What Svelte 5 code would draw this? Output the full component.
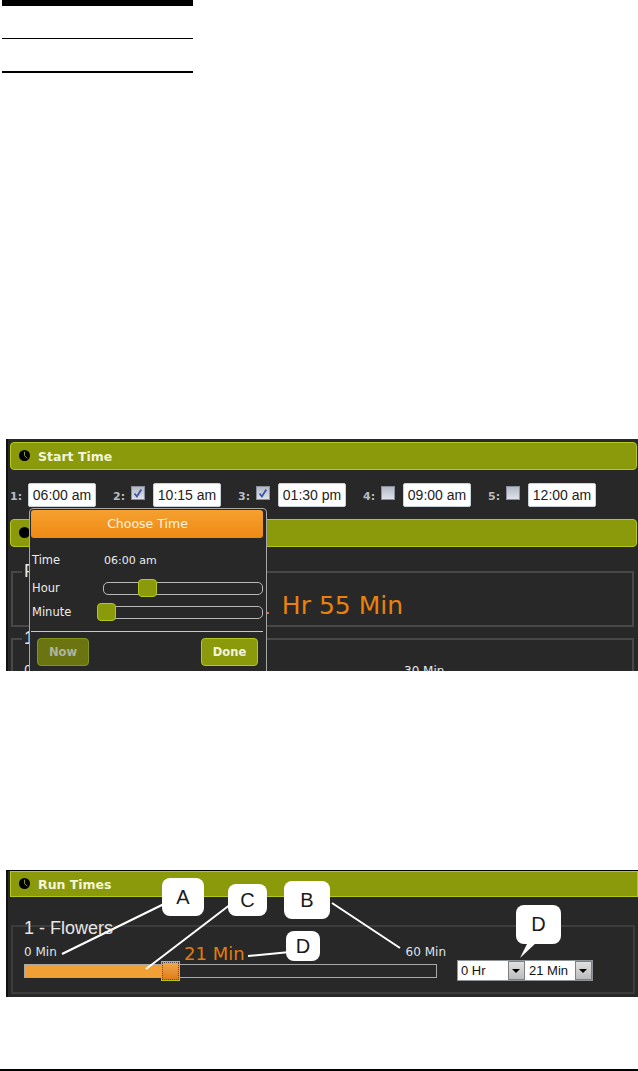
<script>
  const times = [
    { n: 1, t: '06:00 am', cb: null },
    { n: 2, t: '10:15 am', cb: true },
    { n: 3, t: '01:30 pm', cb: true },
    { n: 4, t: '09:00 am', cb: false },
    { n: 5, t: '12:00 am', cb: false }
  ];
  const callouts = [
    { l: 'A', x: 162, y: 7, w: 42, h: 38 },
    { l: 'C', x: 228, y: 13, w: 39, h: 32 },
    { l: 'B', x: 284, y: 10, w: 46, h: 38 },
    { l: 'D', x: 286, y: 60, w: 34, h: 30 },
    { l: 'D', x: 516, y: 34, w: 45, h: 39 }
  ];
</script>

<div class="page">
  <div class="rules">
    <div class="bar"></div>
    <div class="thin"></div>
    <div class="thick"></div>
  </div>

  <section class="shot one">
    <header class="head">
      <svg class="clock" viewBox="0 0 10 10"><circle cx="5" cy="5" r="5" fill="#000"/><path d="M5 1.5v3.7l2.6 2.2" fill="none" stroke="#8a9a0a" stroke-width=".9"/></svg>
      <span>Start Time</span>
    </header>
    <div class="times">
      {#each times as s}
        <div class="slot" class:first={s.cb === null}>
          <span class="num">{s.n}:</span>
          {#if s.cb !== null}
            <span class="check">{#if s.cb}<svg viewBox="0 0 12 12"><path d="M2.5 6.5l2.4 3 4.4-7" fill="none" stroke="#3a55a8" stroke-width="1.8"/></svg>{/if}</span>
          {/if}
          <span class="time">{s.t}</span>
        </div>
      {/each}
    </div>
    <header class="head second">
      <svg class="clock" viewBox="0 0 10 10"><circle cx="5" cy="5" r="5" fill="#000"/></svg>
    </header>
    <div class="field total">
      <span class="legend">F</span>
      <span class="big"><span class="one-digit">1</span> Hr 55 Min</span>
    </div>
    <div class="field zone">
      <span class="legend">1</span>
      <div class="scale"><span>0</span><span class="mid">30 Min</span></div>
    </div>

    <div class="popup">
      <div class="choose">Choose Time</div>
      <div class="prow time-row"><span class="plabel">Time</span><span class="pval">06:00 am</span></div>
      <div class="prow hour"><span class="plabel">Hour</span><div class="track"><i class="knob k1"></i></div></div>
      <div class="prow minute"><span class="plabel">Minute</span><div class="track"><i class="knob k2"></i></div></div>
      <hr />
      <div class="btns"><span class="btn now">Now</span><span class="btn done">Done</span></div>
    </div>
  </section>

  <section class="shot two">
    <header class="head run">
      <svg class="clock" viewBox="0 0 10 10"><circle cx="5" cy="5" r="5" fill="#000"/><path d="M5 1.5v3.7l2.6 2.2" fill="none" stroke="#8a9a0a" stroke-width=".9"/></svg>
      <span>Run Times</span>
    </header>
    <div class="field flowers">
      <span class="legend name">1 - Flowers</span>
      <div class="control">
        <div class="slider-wrap">
          <div class="marks"><span>0 Min</span><span class="val">21 Min</span><span>60 Min</span></div>
          <div class="slider"><div class="fill"></div><i class="handle"></i></div>
        </div>
        <div class="selects">
          <div class="sel s1"><span>0 Hr</span><b class="arrow"></b></div>
          <div class="sel s2"><span>21 Min</span><b class="arrow"></b></div>
        </div>
      </div>
    </div>

    <svg class="leaders" viewBox="0 0 632 127">
      <path d="M56 83L160 32M140 98L225 33M326 32L394 77M242 85L284 81" fill="none" stroke="#fff" stroke-width="2"/>
      <path d="M514 87L522 71H531Z" fill="#fff"/>
    </svg>
    {#each callouts as c}
      <div class="callout" style="left:{c.x - 6}px;top:{c.y}px;width:{c.w}px;height:{c.h}px">{c.l}</div>
    {/each}
  </section>

  <div class="foot"></div>
</div>

<style>
  :global(body) { margin: 0; background: #fff; }
  .page { width: 638px; height: 1071px; display: flex; flex-direction: column; overflow: hidden; background: #fff; font-family: "DejaVu Sans", sans-serif; }

  .rules { width: 191px; margin-left: 2px; height: 439px; flex: none; }
  .bar { height: 6px; background: #000; }
  .thin { height: 1px; background: #000; margin-top: 32px; }
  .thick { height: 2px; background: #000; margin-top: 32px; }

  .shot { flex: none; position: relative; margin-left: 6px; width: 632px; background: #282828; box-sizing: border-box; overflow: hidden; border-left: 2px solid #111; }
  .one { height: 232px; padding: 3px 1px 0 2px; }
  .two { height: 127px; margin-top: 199px; padding: 1px 0 0 2px; border-top: 1px solid #000; }

  .head { height: 28px; box-sizing: border-box; background: #8a9a0a; border: 1px solid #b4c81e; border-radius: 4px; display: flex; align-items: center; gap: 8px; padding: 1px 0 0 8px; color: #f2f4dc; font: bold 12.5px "DejaVu Sans", sans-serif; }
  .head.second { margin-top: 12px; }
  .head.run { height: 26px; border-radius: 0; margin-top: -1px; }
  .clock { width: 11px; height: 11px; flex: none; margin-top: -3px; }

  .times { display: flex; height: 37px; align-items: center; padding-top: 12px; box-sizing: border-box; }
  .slot { display: flex; align-items: center; width: 125px; color: #b8bcc4; font: bold 11px "DejaVu Sans", sans-serif; box-sizing: border-box; flex: none; }
  .slot.first { width: 103px; }
  .num { width: 18px; padding-top: 3px; box-sizing: border-box; }
  .check { width: 14px; height: 14px; box-sizing: border-box; background: linear-gradient(#b4b8c4, #dfe2ea); border: 1px solid #8a90a0; margin-right: 8px; margin-top: -4px; display: flex; }
  .check svg { width: 12px; height: 12px; }
  .time { width: 68px; height: 24px; box-sizing: border-box; background: #fff; border: 1px solid #c8d0d8; border-radius: 2px; color: #222; font: 14px/22px "Liberation Sans", sans-serif; text-align: center; }

  .field { position: relative; border: 2px solid #484848; box-sizing: border-box; margin-left: 1px; width: 623px; }
  .legend { position: absolute; left: 9px; color: #e8e8e8; font: 18px "Liberation Sans", sans-serif; background: #282828; padding: 0 2px; }
  .total { height: 56px; margin-top: 24px; }
  .total .legend { top: -12px; }
  .big { position: absolute; left: 245px; top: 19px; color: #e8820c; font-size: 25px; line-height: 28px; white-space: nowrap; }
  .one-digit { margin: 0 3px 0 -3px; }
  .zone { height: 80px; margin-top: 11px; }
  .zone .legend { top: -12px; }
  .scale { position: absolute; left: 11px; top: 23px; font-size: 12px; color: #e4e8ec; }
  .scale .mid { position: absolute; left: 380px; top: 1px; white-space: nowrap; }

  .popup { position: absolute; left: 21px; top: 69px; width: 238px; height: 175px; box-sizing: border-box; background: #282828; border: 1px solid #a8a8a8; border-radius: 4px; padding: 1px; color: #ececec; font: 11.5px "DejaVu Sans", sans-serif; }
  .choose { width: 232px; height: 28px; box-sizing: border-box; background: linear-gradient(#f5a030, #ee8a14); border-radius: 3px; color: #fff4e0; font-size: 12.5px; line-height: 28px; text-align: center; padding-left: 1px; }
  .prow { display: flex; align-items: center; height: 24px; position: relative; }
  .time-row { margin: 10px 0 4px; }
  .plabel { width: 72px; padding-left: 1px; flex: none; box-sizing: border-box; }
  .pval { margin-left: 1px; font-size: 11px; }
  .track { width: 160px; height: 13px; box-sizing: border-box; border: 1px solid #b8b8b8; border-radius: 5px; position: relative; }
  .knob { position: absolute; top: -4px; width: 19px; height: 18px; box-sizing: border-box; background: #8a9a0a; border: 1px solid #b4c81e; border-radius: 4px; }
  .k1 { left: 34px; }
  .k2 { left: -7px; }
  hr { width: 232px; margin: 7px 0 0; border: 0; border-top: 1px solid #c8c8c8; }
  .btns { display: flex; justify-content: space-between; padding: 6px 5px 0 6px; width: 232px; box-sizing: border-box; }
  .btn { height: 28px; box-sizing: border-box; border-radius: 4px; text-align: center; line-height: 26px; font-size: 11.5px; font-weight: bold; }
  .now { width: 52px; background: #6a7410; border: 1px solid #86941a; color: #b0b4a0; }
  .done { width: 57px; background: #8a9a0a; border: 1px solid #b4c81e; color: #f2f4dc; }

  .flowers { height: 69px; margin-top: 28px; border-color: #3c3c3c; width: 624px; }
  .name { top: -9px; left: 11px; font-size: 18px; padding: 0; color: #e6e6e6; background: none; }
  .control { position: absolute; left: 11px; top: 12px; display: flex; gap: 20px; }
  .slider-wrap { width: 413px; }
  .marks { display: flex; justify-content: space-between; align-items: flex-start; height: 25px; font-size: 12px; color: #dfe4ea; }
  .marks span:first-child, .marks span:last-child { line-height: 20px; padding-top: 3px; }
  .marks span:last-child { margin-right: -9px; }
  .val { position: absolute; left: 160px; top: 2px; color: #e07c0c; font-size: 18px; line-height: 26px; }
  .slider { position: relative; height: 14px; box-sizing: border-box; border: 1px solid #a8a8a8; }
  .fill { width: 139px; height: 100%; background: #f0a034; }
  .handle { position: absolute; left: 136px; top: -4px; width: 19px; height: 20px; box-sizing: border-box; background: linear-gradient(#f0a850, #e07c18); border: 1px solid #b4c81e; outline: 1px dotted #444; outline-offset: -2px; }
  .selects { display: flex; background: #8f9499; padding: 1px; margin-top: 21px; height: 21px; box-sizing: border-box; gap: 0; width: 136px; }
  .sel { display: flex; justify-content: space-between; align-items: center; background: #fff; color: #111; font: 13px "Liberation Sans", sans-serif; padding-left: 3px; box-sizing: border-box; height: 19px; }
  .s1 { width: 69px; padding-right: 2px; }
  .s2 { width: 65px; padding-left: 2px; }
  .arrow { width: 17px; height: 19px; background: linear-gradient(#e0e0e0, #bcbcbc); position: relative; border: 1px solid #808080; box-sizing: border-box; }
  .arrow::after { content: ""; position: absolute; left: 3px; top: 7px; border: 4px solid transparent; border-top: 4px solid #000; border-bottom: 0; }

  .leaders { position: absolute; left: -2px; top: 0; width: 632px; height: 127px; pointer-events: none; }
  .callout { position: absolute; margin-left: -2px; box-sizing: border-box; background: #fff; border-radius: 8px; display: flex; align-items: center; justify-content: center; color: #1a1a1a; font: 20px "Liberation Sans", sans-serif; }

  .foot { flex: none; height: 2px; background: #000; margin-top: 72px; }
</style>
